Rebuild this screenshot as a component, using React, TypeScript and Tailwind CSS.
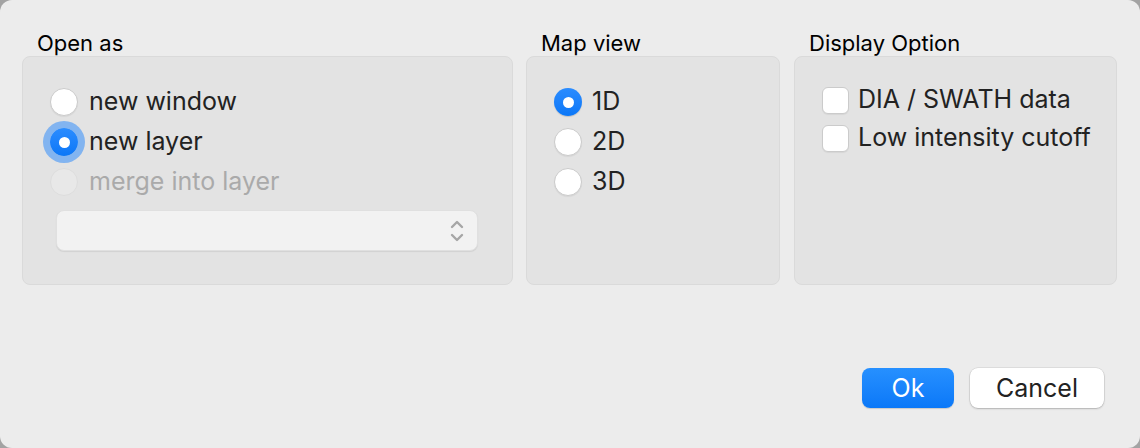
import React from 'react';

const font = { fontFamily: 'Inter, "Noto Sans", sans-serif' };

function Radio({ checked, focused, disabled }: { checked?: boolean; focused?: boolean; disabled?: boolean }) {
  if (checked) {
    return (
      <span
        className={`w-[28px] h-[28px] rounded-full bg-gradient-to-b from-[#2a8cff] to-[#0a77f7] flex items-center justify-center shrink-0 ${
          focused ? 'shadow-[0_0_0_7px_rgba(10,122,255,0.45)]' : 'shadow-[0_1px_1px_rgba(0,0,0,0.15)]'
        }`}
      >
        <span className="w-[11px] h-[11px] rounded-full bg-white" />
      </span>
    );
  }
  return (
    <span
      className={`w-[28px] h-[28px] rounded-full shrink-0 border ${
        disabled
          ? 'bg-[#e8e8e8] border-[#dddddd]'
          : 'bg-white border-[#cbcbcb] shadow-[0_1px_1px_rgba(0,0,0,0.06)]'
      }`}
    />
  );
}

function Checkbox() {
  return (
    <span className="w-[27px] h-[27px] rounded-[6px] bg-white border border-[#cbcbcb] shadow-[0_1px_1px_rgba(0,0,0,0.06)] shrink-0" />
  );
}

function Group({ label, className, children }: { label: string; className: string; children: React.ReactNode }) {
  return (
    <div className={`flex flex-col ${className}`}>
      <div className="h-[26px] pl-[15px] text-[22px] leading-[26px] text-black">{label}</div>
      <div className="h-[229px] rounded-[8px] bg-[#e3e3e3] border border-[#dadada]">{children}</div>
    </div>
  );
}

export default function App() {
  return (
    <div className="w-[1140px] h-[448px] bg-[#a3a3a3]" style={font}>
      <div className="w-full h-full rounded-[12px] bg-[#ececec] flex flex-col pt-[30px] pl-[22px] pr-[23px] pb-[40px]">
        <div className="flex">
          <Group label="Open as" className="w-[491px]">
            <div className="pt-[25px] pl-[27px] pr-[34px] flex flex-col">
              <div className="h-[40px] flex items-center gap-[11px]">
                <Radio />
                <span className="text-[25px] text-[#222]">new window</span>
              </div>
              <div className="h-[40px] flex items-center gap-[11px]">
                <Radio checked focused />
                <span className="text-[25px] text-[#222]">new layer</span>
              </div>
              <div className="h-[40px] flex items-center gap-[11px]">
                <Radio disabled />
                <span className="text-[25px] text-[#aaaaaa]">merge into layer</span>
              </div>
              <div className="mt-[8px] ml-[6px] h-[41px] rounded-[8px] bg-[#f2f2f2] border border-[#e0e0e0] shadow-[0_1px_1px_rgba(0,0,0,0.08)] flex items-center justify-end pr-[13px]">
                <svg width="14" height="24" viewBox="0 0 14 24" fill="none" stroke="#a6a6a6" strokeWidth="2.4" strokeLinecap="round" strokeLinejoin="round">
                  <path d="M2 8 L7 3 L12 8" />
                  <path d="M2 16 L7 21 L12 16" />
                </svg>
              </div>
            </div>
          </Group>
          <Group label="Map view" className="w-[254px] ml-[13px]">
            <div className="pt-[25px] pl-[27px] flex flex-col">
              <div className="h-[40px] flex items-center gap-[10px]">
                <Radio checked />
                <span className="text-[25px] text-[#222]">1D</span>
              </div>
              <div className="h-[40px] flex items-center gap-[10px]">
                <Radio />
                <span className="text-[25px] text-[#222]">2D</span>
              </div>
              <div className="h-[40px] flex items-center gap-[10px]">
                <Radio />
                <span className="text-[25px] text-[#222]">3D</span>
              </div>
            </div>
          </Group>
          <Group label="Display Option" className="w-[323px] ml-[14px]">
            <div className="pt-[24px] pl-[27px] flex flex-col">
              <div className="h-[38px] flex items-center gap-[9px]">
                <Checkbox />
                <span className="text-[25px] text-[#222]">DIA / SWATH data</span>
              </div>
              <div className="h-[38px] flex items-center gap-[9px]">
                <Checkbox />
                <span className="text-[25px] text-[#222]">Low intensity cutoff</span>
              </div>
            </div>
          </Group>
        </div>
        <div className="mt-auto flex justify-end gap-[16px] pr-[13px]">
          <button className="w-[92px] h-[40px] rounded-[8px] bg-gradient-to-b from-[#2690ff] to-[#0a78f8] text-white text-[25px] leading-none shadow-[0_1px_1px_rgba(0,0,0,0.15)]">
            Ok
          </button>
          <button className="w-[134px] h-[40px] rounded-[8px] bg-white text-[#222] text-[25px] leading-none shadow-[0_0_0_0.5px_rgba(0,0,0,0.12),0_1px_2px_rgba(0,0,0,0.2)]">
            Cancel
          </button>
        </div>
      </div>
    </div>
  );
}
